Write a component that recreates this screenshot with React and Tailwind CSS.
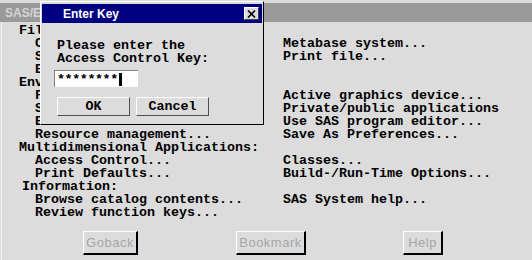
import React from "react";

// rows 0-7 sit under the dialog, so only their first letters show
const leftRows = [
  { text: "File:", indent: "pl-0", hidden: true },
  { text: "Catalog manager...", indent: "pl-[16px]", hidden: true },
  { text: "SAS/AF applications...", indent: "pl-[16px]", hidden: true },
  { text: "Edit catalog entries...", indent: "pl-[16px]", hidden: true },
  { text: "Environment:", indent: "pl-0", hidden: true },
  { text: "Fonts and colors...", indent: "pl-[16px]", hidden: true },
  { text: "Session options...", indent: "pl-[16px]", hidden: true },
  { text: "Edit system options...", indent: "pl-[16px]", hidden: true },
  { text: "Resource management...", indent: "pl-[16px]" },
  { text: "Multidimensional Applications:", indent: "pl-0" },
  { text: "Access Control...", indent: "pl-[16px]" },
  { text: "Print Defaults...", indent: "pl-[16px]" },
  { text: "Information:", indent: "pl-[3px]" },
  { text: "Browse catalog contents...", indent: "pl-[16px]" },
  { text: "Review function keys...", indent: "pl-[16px]" }
];

const rightRows = [
  "",
  "Metabase system...",
  "Print file...",
  "",
  "",
  "Active graphics device...",
  "Private/public applications",
  "Use SAS program editor...",
  "Save As Preferences...",
  "",
  "Classes...",
  "Build-/Run-Time Options...",
  "",
  "SAS System help...",
  ""
];

const mono = "font-['Liberation_Mono',monospace] font-bold text-[13.33px] leading-[13px] text-black";

function NavButton({ label, width, className }) {
  return (
    <div
      className={`${width} ${className} h-[24px] flex items-center justify-center border-t border-l border-t-white border-l-white border-r-2 border-b-2 border-r-black border-b-black bg-[#dcdcdc] text-[13px] text-[#a6a6a6] font-['Liberation_Sans',sans-serif] tracking-[0.5px]`}
    >
      {label}
    </div>
  );
}

function EnterKeyDialog() {
  return (
    <div className="absolute left-[40px] top-[1px] w-[224px] h-[124px] bg-[#dcdcdc] border-t border-l border-t-white border-l-white border-r border-b border-r-black border-b-black p-[1px]">
      <div className="h-[19px] mt-[1px] bg-[#000080] flex items-center justify-between pl-[21px] pr-[3px]">
        <span className="text-white font-bold text-[12px] font-['Liberation_Sans',sans-serif]">
          Enter Key
        </span>
        <div className="w-[15px] h-[13px] bg-[#dcdcdc] border-t border-l border-t-white border-l-white border-r border-b border-r-[#404040] border-b-[#404040] flex items-center justify-center">
          <svg width="9" height="8" viewBox="0 0 9 8">
            <path d="M1 0.5 L8 7.5 M8 0.5 L1 7.5" stroke="black" strokeWidth="1.6" />
          </svg>
        </div>
      </div>
      <div className="pl-[15px] pt-[16px]">
        <div className={mono}>Please enter the</div>
        <div className={mono}>Access Control Key:</div>
      </div>
      <div className="ml-[12px] mt-[5px] w-[84px] h-[17px] bg-white border-t border-l border-t-[#808080] border-l-[#808080] flex items-center pl-[2px]">
        <span className={`${mono} tracking-[-0.4px]`}>********</span>
        <span className="ml-[1px] w-[3px] h-[13px] bg-black" />
      </div>
      <div className="flex gap-[6px] ml-[15px] mt-[10px]">
        <div className={`w-[73px] h-[19px] flex items-center justify-center border-t border-l border-t-white border-l-white border-r border-b border-r-[#505050] border-b-[#505050] ${mono}`}>
          OK
        </div>
        <div className={`w-[73px] h-[19px] flex items-center justify-center border-t border-l border-t-white border-l-white border-r border-b border-r-[#505050] border-b-[#505050] ${mono}`}>
          Cancel
        </div>
      </div>
    </div>
  );
}

export default function App() {
  return (
    <div className="relative w-[532px] h-[260px] bg-[#dcdcdc] overflow-hidden pt-[3px]">
      <div className="absolute left-[1px] top-[22px] w-[1px] h-[238px] bg-[#f2f2f2]" />
      <div className="h-[19px] bg-[#9a9a9a] flex items-center pl-[5px]">
        <span className="w-[35px] overflow-hidden whitespace-pre text-[#d4d4d4] font-bold text-[12px] font-['Liberation_Sans',sans-serif]">
          SAS/EIS Main Menu
        </span>
      </div>
      <div className="flex pl-[19px] pt-[2px]">
        <div className="w-[264px] flex flex-col">
          {leftRows.map((row, i) => (
            <div
              key={i}
              className={`h-[13px] whitespace-pre ${row.indent} ${row.hidden ? "w-[21px] overflow-hidden" : ""} ${mono}`}
            >
              {row.text}
            </div>
          ))}
        </div>
        <div className="flex flex-col">
          {rightRows.map((text, i) => (
            <div key={i} className={`h-[13px] whitespace-pre ${mono}`}>
              {text}
            </div>
          ))}
        </div>
      </div>
      <div className="flex pl-[83px] mt-[12px]">
        <NavButton label="Goback" width="w-[55px]" className="" />
        <NavButton label="Bookmark" width="w-[70px]" className="ml-[98px]" />
        <NavButton label="Help" width="w-[40px]" className="ml-[97px]" />
      </div>
      <EnterKeyDialog />
    </div>
  );
}
